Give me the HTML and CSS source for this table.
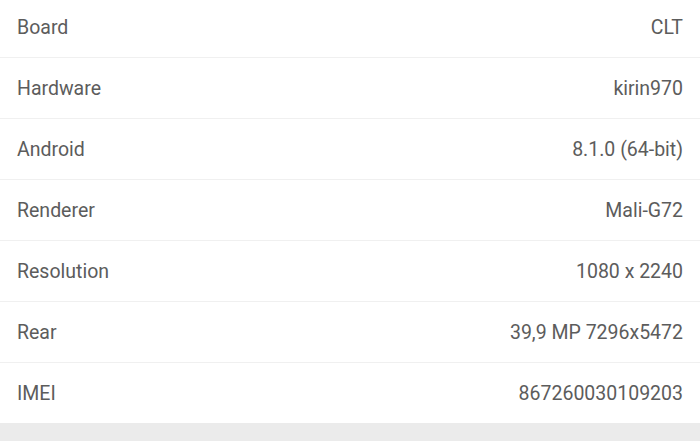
FILE: index.html
```html
<!DOCTYPE html>
<html>
<head>
<meta charset="utf-8">
<link rel="stylesheet" href="styles.css">
</head>
<body>
<div class="list">
  <div class="row"><span class="label">Board</span><span class="value">CLT</span></div>
  <div class="row"><span class="label">Hardware</span><span class="value">kirin970</span></div>
  <div class="row"><span class="label">Android</span><span class="value">8.1.0 (64-bit)</span></div>
  <div class="row"><span class="label">Renderer</span><span class="value">Mali-G72</span></div>
  <div class="row"><span class="label">Resolution</span><span class="value">1080 x 2240</span></div>
  <div class="row"><span class="label">Rear</span><span class="value">39,9 MP 7296x5472</span></div>
  <div class="row"><span class="label">IMEI</span><span class="value">867260030109203</span></div>
</div>
<div class="footer"></div>
</body>
</html>
```
FILE: styles.css
```css
html, body {
  margin: 0;
  padding: 0;
  background: #ebebeb;
  height: 100%;
  overflow: hidden;
}
.list {
  background: #ffffff;
  margin-top: -3px;
}
.row {
  display: flex;
  justify-content: space-between;
  align-items: center;
  height: 59px;
  padding: 1px 17px 0;
  border-bottom: 1px solid #f0f0f0;
  font-family: Roboto, "Noto Sans", sans-serif;
  font-size: 19.5px;
  color: #5c5c5c;
}
.row:last-child {
  border-bottom: none;
}
.footer {
  height: 20px;
  background: #ebebeb;
}
```
